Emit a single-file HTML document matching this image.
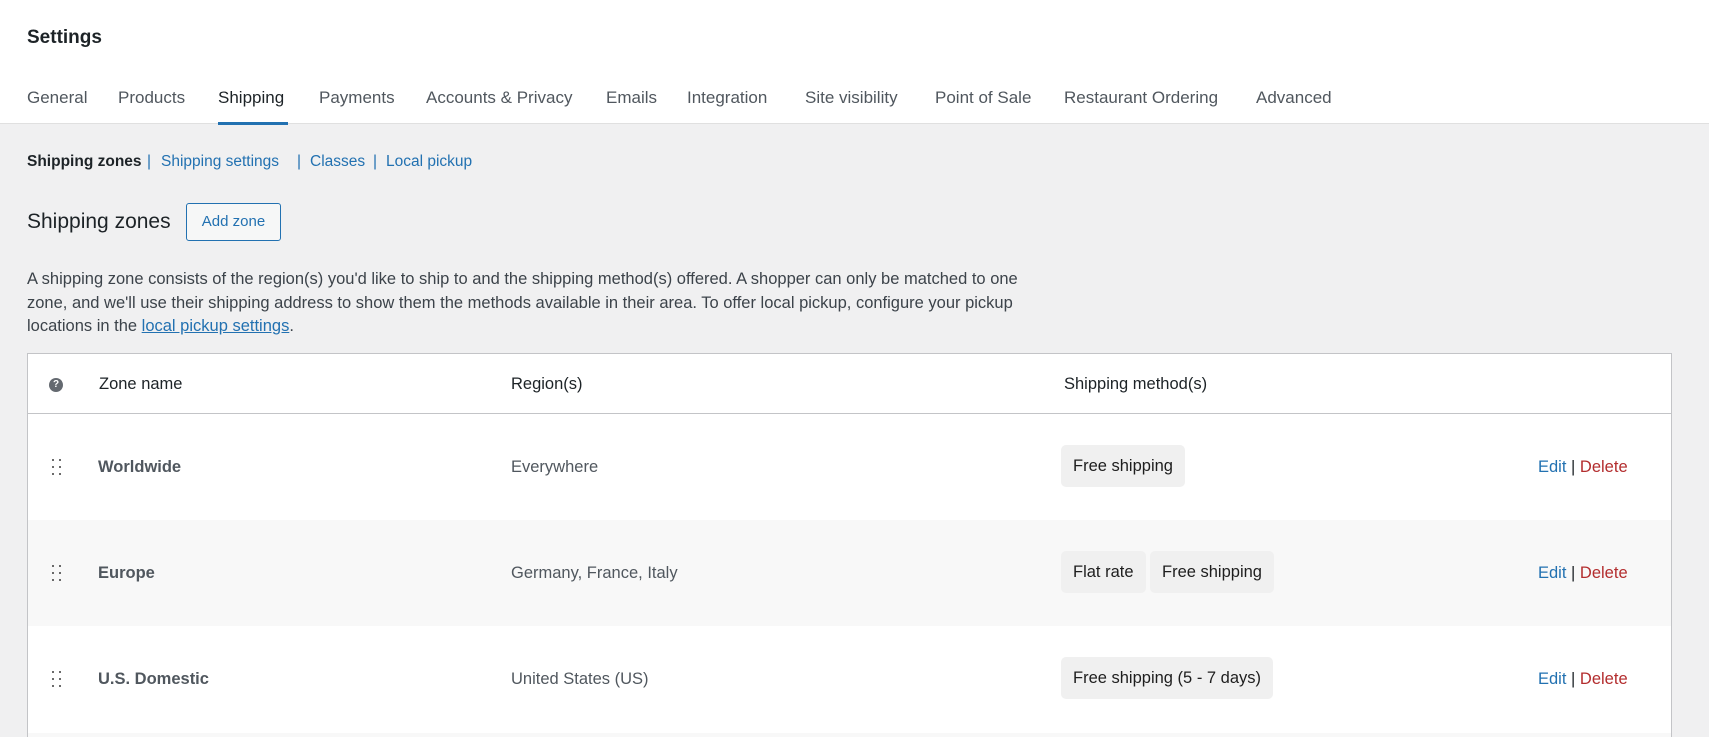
<!DOCTYPE html>
<html style="width:1709px;height:737px;overflow:hidden"><head><meta charset="utf-8"><style>
*{margin:0;padding:0;box-sizing:border-box}
body{width:1709px;height:737px;overflow:hidden;background:#f0f0f1;font-family:"Liberation Sans",sans-serif;color:#1d2327;position:relative}
.top{position:absolute;left:0;top:0;width:1709px;height:124px;background:#fff;border-bottom:1px solid #e0e0e0}
.a{position:absolute;white-space:nowrap}
.tab{position:absolute;top:88px;font-size:17px;color:#50575e}
.sub{font-size:15.5px;color:#2271b1;top:153px}
.pill{position:absolute;background:#f0f0f0;border-radius:5px;height:42px;line-height:42px;padding:0 12px;font-size:16.5px;color:#1e1e1e}
.row{position:absolute;left:28px;width:1643px;height:106px}
.zn{position:absolute;left:70px;font-size:16.5px;font-weight:bold;color:#50575e;top:44px}
.rg{position:absolute;left:483px;font-size:16.5px;color:#50575e;top:44px}
.act{position:absolute;left:1510px;top:44px;font-size:16.5px;color:#2271b1}
.act b{font-weight:normal;color:#1d2327}
.act i{font-style:normal;color:#b32d2e}
.dots{position:absolute;left:24px;top:45px;width:10px;height:18px}
.dots span{position:absolute;width:2px;height:2px;background:#3c3c3c;border-radius:50%}
</style></head><body>
<div class="top"></div>
<div class="a" style="left:27px;top:27px;font-size:19px;font-weight:bold;color:#1d2327">Settings</div>
<div class="tab" style="left:27px">General</div>
<div class="tab" style="left:118px">Products</div>
<div class="tab" style="left:218px;color:#1d2327">Shipping</div>
<div style="position:absolute;left:218px;top:122px;width:70px;height:3px;background:#2271b1"></div>
<div class="tab" style="left:319px">Payments</div>
<div class="tab" style="left:426px">Accounts &amp; Privacy</div>
<div class="tab" style="left:606px">Emails</div>
<div class="tab" style="left:687px">Integration</div>
<div class="tab" style="left:805px">Site visibility</div>
<div class="tab" style="left:935px">Point of Sale</div>
<div class="tab" style="left:1064px">Restaurant Ordering</div>
<div class="tab" style="left:1256px">Advanced</div>

<div class="a sub" style="left:27px;color:#1d2327;font-weight:bold">Shipping zones</div>
<div class="a sub" style="left:147px;color:#2271b1">|</div>
<div class="a sub" style="left:161px">Shipping settings</div>
<div class="a sub" style="left:297px">|</div>
<div class="a sub" style="left:310px">Classes</div>
<div class="a sub" style="left:373px">|</div>
<div class="a sub" style="left:386px">Local pickup</div>

<div class="a" style="left:27px;top:210px;font-size:21px;color:#1d2327">Shipping zones</div>
<div class="a" style="left:186px;top:203px;width:95px;height:38px;border:1px solid #2271b1;border-radius:3px;background:#f6f7f7;color:#2271b1;font-size:15px;line-height:36px;text-align:center">Add zone</div>

<div class="a" style="left:27px;top:268px;font-size:16.5px;line-height:23.5px;color:#3c434a">A shipping zone consists of the region(s) you'd like to ship to and the shipping method(s) offered. A shopper can only be matched to one<br>zone, and we'll use their shipping address to show them the methods available in their area. To offer local pickup, configure your pickup<br>locations in the <span style="color:#2271b1;text-decoration:underline">local pickup settings</span>.</div>

<div style="position:absolute;left:27px;top:353px;width:1645px;height:384px;background:#fff;border:1px solid #c3c4c7;border-bottom:none"></div>
<div style="position:absolute;left:28px;top:413px;width:1643px;height:1px;background:#c3c4c7"></div>
<div class="a" style="left:49px;top:378px;width:14px;height:14px;border-radius:50%;background:#646970;color:#fff;font-size:10px;font-weight:bold;text-align:center;line-height:14px">?</div>
<div class="a" style="left:99px;top:375px;font-size:16.5px;color:#1d2327">Zone name</div>
<div class="a" style="left:511px;top:375px;font-size:16.5px;color:#1d2327">Region(s)</div>
<div class="a" style="left:1064px;top:375px;font-size:16.5px;color:#1d2327">Shipping method(s)</div>

<div class="row" style="top:414px;background:#fff">
<div class="dots"><span style="left:0;top:0"></span><span style="left:7px;top:0"></span><span style="left:0;top:7px"></span><span style="left:7px;top:7px"></span><span style="left:0;top:14px"></span><span style="left:7px;top:14px"></span></div>
<div class="zn">Worldwide</div><div class="rg">Everywhere</div>
<div class="pill" style="left:1033px;top:31px">Free shipping</div>
<div class="act">Edit <b>|</b> <i>Delete</i></div>
</div>
<div class="row" style="top:520px;background:#f8f8f8">
<div class="dots"><span style="left:0;top:0"></span><span style="left:7px;top:0"></span><span style="left:0;top:7px"></span><span style="left:7px;top:7px"></span><span style="left:0;top:14px"></span><span style="left:7px;top:14px"></span></div>
<div class="zn">Europe</div><div class="rg">Germany, France, Italy</div>
<div class="pill" style="left:1033px;top:31px">Flat rate</div>
<div class="pill" style="left:1122px;top:31px">Free shipping</div>
<div class="act">Edit <b>|</b> <i>Delete</i></div>
</div>
<div class="row" style="top:626px;height:107px;background:#fff">
<div class="dots"><span style="left:0;top:0"></span><span style="left:7px;top:0"></span><span style="left:0;top:7px"></span><span style="left:7px;top:7px"></span><span style="left:0;top:14px"></span><span style="left:7px;top:14px"></span></div>
<div class="zn">U.S. Domestic</div><div class="rg">United States (US)</div>
<div class="pill" style="left:1033px;top:31px">Free shipping (5 - 7 days)</div>
<div class="act">Edit <b>|</b> <i>Delete</i></div>
</div>
<div style="position:absolute;left:28px;top:733px;width:1643px;height:4px;background:#f8f8f8"></div>
</body></html>
